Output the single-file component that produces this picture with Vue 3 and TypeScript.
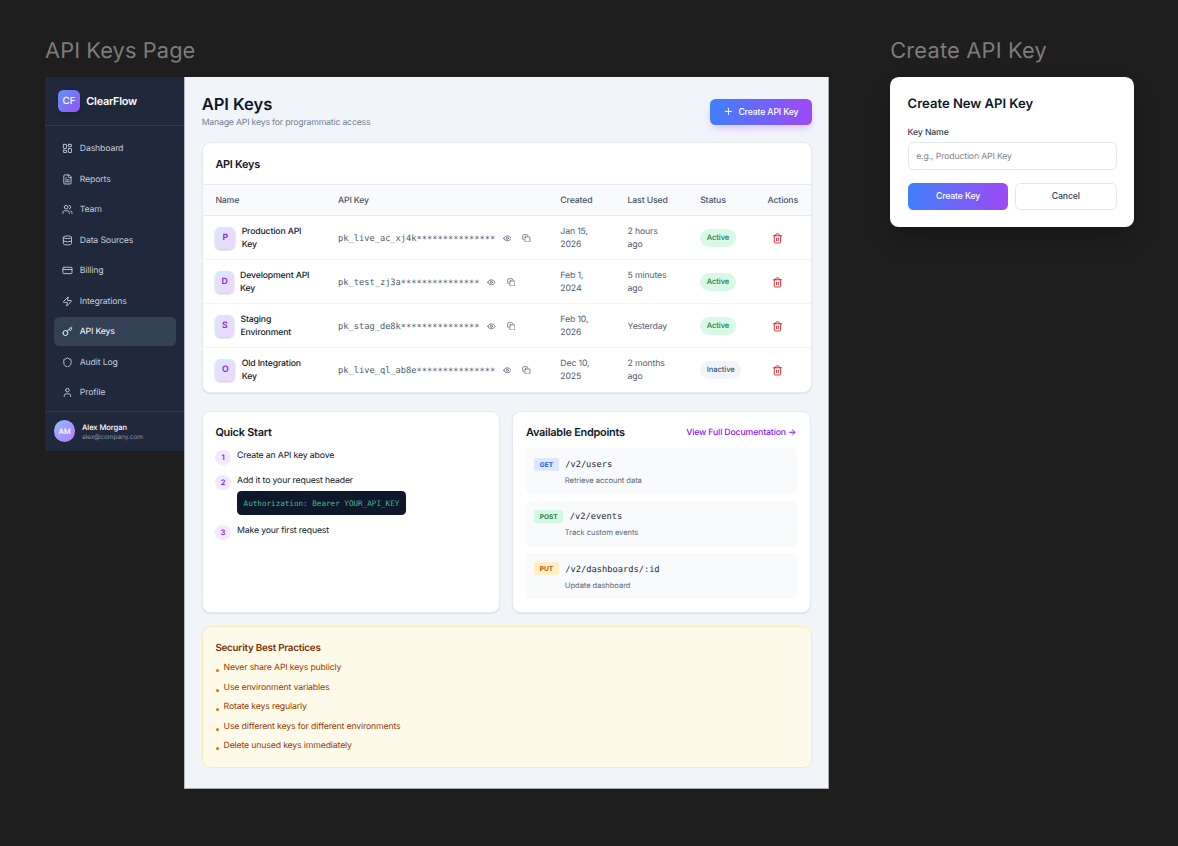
<script setup lang="ts">
interface NavItem {
  label: string
  icon: string[]
  active?: boolean
}

interface ApiKey {
  initial: string
  tileWidth: number
  name: [string, string]
  value: string
  created: [string, string]
  used: string[]
  active: boolean
}

interface Endpoint {
  method: string
  path: string
  text: string
}

const nav: NavItem[] = [
  { label: 'Dashboard', icon: ['M4 3h5a1 1 0 0 1 1 1v7a1 1 0 0 1-1 1H4a1 1 0 0 1-1-1V4a1 1 0 0 1 1-1z', 'M15 3h5a1 1 0 0 1 1 1v3a1 1 0 0 1-1 1h-5a1 1 0 0 1-1-1V4a1 1 0 0 1 1-1z', 'M15 12h5a1 1 0 0 1 1 1v7a1 1 0 0 1-1 1h-5a1 1 0 0 1-1-1v-7a1 1 0 0 1 1-1z', 'M4 16h5a1 1 0 0 1 1 1v3a1 1 0 0 1-1 1H4a1 1 0 0 1-1-1v-3a1 1 0 0 1 1-1z'] },
  { label: 'Reports', icon: ['M15 2H6a2 2 0 0 0-2 2v16a2 2 0 0 0 2 2h12a2 2 0 0 0 2-2V7z', 'M14 2v4a2 2 0 0 0 2 2h4', 'M10 9H8', 'M16 13H8', 'M16 17H8'] },
  { label: 'Team', icon: ['M16 21v-2a4 4 0 0 0-4-4H6a4 4 0 0 0-4 4v2', 'M5 7a4 4 0 1 0 8 0a4 4 0 1 0-8 0', 'M22 21v-2a4 4 0 0 0-3-3.87', 'M16 3.13a4 4 0 0 1 0 7.75'] },
  { label: 'Data Sources', icon: ['M3 5a9 3 0 1 0 18 0a9 3 0 1 0-18 0', 'M3 5v14a9 3 0 0 0 18 0V5', 'M3 12a9 3 0 0 0 18 0'] },
  { label: 'Billing', icon: ['M4 5h16a2 2 0 0 1 2 2v10a2 2 0 0 1-2 2H4a2 2 0 0 1-2-2V7a2 2 0 0 1 2-2z', 'M2 10h20'] },
  { label: 'Integrations', icon: ['M4 14a1 1 0 0 1-.78-1.63l9.9-10.2a.5.5 0 0 1 .86.46l-1.92 6.02A1 1 0 0 0 13 10h7a1 1 0 0 1 .78 1.63l-9.9 10.2a.5.5 0 0 1-.86-.46l1.92-6.02A1 1 0 0 0 11 14z'] },
  { label: 'API Keys', icon: ['m15.5 7.5 2.3 2.3a1 1 0 0 0 1.4 0l2.1-2.1a1 1 0 0 0 0-1.4L19 4', 'm21 2-9.6 9.6', 'M2 15.5a5.5 5.5 0 1 0 11 0a5.5 5.5 0 1 0-11 0'], active: true },
  { label: 'Audit Log', icon: ['M20 13c0 5-3.5 7.5-7.66 8.95a1 1 0 0 1-.67-.01C7.5 20.5 4 18 4 13V6a1 1 0 0 1 1-1c2 0 4.5-1.2 6.24-2.72a1.17 1.17 0 0 1 1.52 0C14.51 3.81 17 5 19 5a1 1 0 0 1 1 1z'] },
  { label: 'Profile', icon: ['M19 21v-2a4 4 0 0 0-4-4H9a4 4 0 0 0-4 4v2', 'M8 7a4 4 0 1 0 8 0a4 4 0 1 0-8 0'] },
]

const stars = '*'.repeat(15)

const keys: ApiKey[] = [
  { initial: 'P', tileWidth: 19.8, name: ['Production API', 'Key'], value: 'pk_live_ac_xj4k', created: ['Jan 15,', '2026'], used: ['2 hours', 'ago'], active: true },
  { initial: 'D', tileWidth: 18.2, name: ['Development API', 'Key'], value: 'pk_test_zj3a', created: ['Feb 1,', '2024'], used: ['5 minutes', 'ago'], active: true },
  { initial: 'S', tileWidth: 18.6, name: ['Staging', 'Environment'], value: 'pk_stag_de8k', created: ['Feb 10,', '2026'], used: ['Yesterday'], active: true },
  { initial: 'O', tileWidth: 19.8, name: ['Old Integration', 'Key'], value: 'pk_live_ql_ab8e', created: ['Dec 10,', '2025'], used: ['2 months', 'ago'], active: false },
]

const endpoints: Endpoint[] = [
  { method: 'GET', path: '/v2/users', text: 'Retrieve account data' },
  { method: 'POST', path: '/v2/events', text: 'Track custom events' },
  { method: 'PUT', path: '/v2/dashboards/:id', text: 'Update dashboard' },
]

const practices: string[] = [
  'Never share API keys publicly',
  'Use environment variables',
  'Rotate keys regularly',
  'Use different keys for different environments',
  'Delete unused keys immediately',
]
</script>

<template>
  <div class="canvas">
    <section class="board">
      <h2 class="board-label">API Keys Page</h2>
      <div class="frame">
        <aside class="sidebar">
          <div class="brand">
            <div class="logo">CF</div>
            <span class="brand-name">ClearFlow</span>
          </div>
          <nav class="nav">
            <a v-for="item in nav" :key="item.label" class="nav-item" :class="{ active: item.active }">
              <svg class="icon nav-icon" viewBox="0 0 24 24"><path v-for="d in item.icon" :key="d" :d="d" /></svg>
              <span>{{ item.label }}</span>
            </a>
          </nav>
          <div class="account">
            <div class="avatar">AM</div>
            <div class="account-text">
              <span class="account-name">Alex Morgan</span>
              <span class="account-mail">alex@company.com</span>
            </div>
          </div>
        </aside>

        <main class="main">
          <header class="page-head">
            <div>
              <h1>API Keys</h1>
              <p class="subtitle">Manage API keys for programmatic access</p>
            </div>
            <button class="btn primary create">
              <svg class="icon plus" viewBox="0 0 24 24"><path d="M5 12h14M12 5v14" /></svg>
              <span>Create API Key</span>
            </button>
          </header>

          <section class="card keys">
            <h3 class="keys-title">API Keys</h3>
            <div class="row head">
              <span>Name</span><span>API Key</span><span>Created</span><span>Last Used</span><span>Status</span><span>Actions</span>
            </div>
            <div v-for="k in keys" :key="k.value" class="row">
              <div class="name-cell">
                <div class="tile" :style="{ width: k.tileWidth + 'px' }">{{ k.initial }}</div>
                <div class="key-name"><div v-for="line in k.name" :key="line">{{ line }}</div></div>
              </div>
              <div class="value-cell">
                <code>{{ k.value }}<span class="stars">{{ stars }}</span></code>
                <svg class="icon small" viewBox="0 0 24 24"><path d="M2.06 12.35a1 1 0 0 1 0-.7 10.75 10.75 0 0 1 19.88 0 1 1 0 0 1 0 .7 10.75 10.75 0 0 1-19.88 0z" /><circle cx="12" cy="12" r="3" /></svg>
                <svg class="icon small copy" viewBox="0 0 24 24"><rect x="8" y="8" width="14" height="14" rx="2" /><path d="M4 16c-1.1 0-2-.9-2-2V4c0-1.1.9-2 2-2h10c1.1 0 2 .9 2 2" /></svg>
              </div>
              <div class="muted"><div v-for="line in k.created" :key="line">{{ line }}</div></div>
              <div class="muted" :class="{ single: k.used.length === 1 }"><div v-for="line in k.used" :key="line">{{ line }}</div></div>
              <div><span class="status" :class="{ off: !k.active }">{{ k.active ? 'Active' : 'Inactive' }}</span></div>
              <div class="action">
                <svg class="icon trash" viewBox="0 0 24 24"><path d="M3 6h18M19 6v14c0 1-1 2-2 2H7c-1 0-2-1-2-2V6M8 6V4c0-1 1-2 2-2h4c1 0 2 1 2 2v2M10 11v6M14 11v6" /></svg>
              </div>
            </div>
          </section>

          <div class="columns">
            <section class="card panel">
              <h3>Quick Start</h3>
              <ol class="steps">
                <li><span class="num">1</span><div class="step-text">Create an API key above</div></li>
                <li>
                  <span class="num">2</span>
                  <div class="step-text">Add it to your request header
                    <code class="snippet">Authorization: Bearer YOUR_API_KEY</code>
                  </div>
                </li>
                <li><span class="num">3</span><div class="step-text">Make your first request</div></li>
              </ol>
            </section>
            <section class="card panel">
              <div class="panel-head">
                <h3>Available Endpoints</h3>
                <a class="docs">View Full Documentation →</a>
              </div>
              <div class="endpoints">
                <div v-for="e in endpoints" :key="e.path" class="endpoint">
                  <div class="endpoint-top">
                    <span class="method" :class="e.method.toLowerCase()">{{ e.method }}</span>
                    <code>{{ e.path }}</code>
                  </div>
                  <p>{{ e.text }}</p>
                </div>
              </div>
            </section>
          </div>

          <section class="security">
            <h4>Security Best Practices</h4>
            <ul>
              <li v-for="p in practices" :key="p"><i class="dot"></i><span>{{ p }}</span></li>
            </ul>
          </section>
        </main>
      </div>
    </section>

    <section class="board">
      <h2 class="board-label wide">Create API Key</h2>
      <div class="modal">
        <h3>Create New API Key</h3>
        <label>Key Name</label>
        <div class="field">e.g., Production API Key</div>
        <div class="buttons">
          <button class="btn primary">Create Key</button>
          <button class="btn outline">Cancel</button>
        </div>
      </div>
    </section>
  </div>
</template>

<style>
html,
body {
  margin: 0;
  background: #1e1e1e;
}
</style>

<style scoped>
.canvas,
.canvas * {
  box-sizing: border-box;
}
.canvas {
  display: flex;
  gap: 61.3px;
  width: 1178px;
  height: 846px;
  padding: 36px 0 0 45px;
  overflow: hidden;
  background: #1e1e1e;
  font-family: Inter, 'Liberation Sans', sans-serif;
  font-size: 8.71px;
  line-height: 13.06px;
  letter-spacing: -0.15px;
  color: #0f172a;
  text-rendering: geometricPrecision;
  -webkit-font-smoothing: antialiased;
}
h1, h2, h3, h4, p, ol, ul {
  margin: 0;
  padding: 0;
  list-style: none;
}
code {
  font-family: 'DejaVu Sans Mono', monospace;
  letter-spacing: 0;
}
.icon {
  display: block;
  flex: none;
  fill: none;
  stroke: currentColor;
  stroke-width: 2;
  stroke-linecap: round;
  stroke-linejoin: round;
}
.board-label {
  height: 41.3px;
  padding-top: 1px;
  font-size: 21.8px;
  line-height: 28px;
  font-weight: 400;
  letter-spacing: 0.1px;
  color: #7c7c7c;
  white-space: nowrap;
}
.board-label.wide {
  letter-spacing: 0.2px;
}
.frame {
  display: flex;
  align-items: flex-start;
}

/* Sidebar */
.sidebar {
  width: 139.3px;
  height: 373.4px;
  display: flex;
  flex-direction: column;
  background: #20293b;
}
.brand {
  display: flex;
  align-items: center;
  gap: 6.5px;
  height: 48.4px;
  padding: 0 13.06px;
  border-bottom: 1px solid #2e3a4e;
}
.logo {
  width: 21.8px;
  height: 21.8px;
  border-radius: 5.4px;
  background: linear-gradient(135deg, #5b95f8, #9a50f6);
  color: #fff;
  font-size: 9.8px;
  font-weight: 500;
  line-height: 24px;
  text-align: center;
  box-shadow: 0 3px 5px rgba(0, 0, 0, 0.15);
}
.brand-name {
  padding-top: 1px;
  color: #fff;
  font-size: 10.9px;
  font-weight: 600;
  letter-spacing: -0.28px;
}
.nav {
  display: flex;
  flex-direction: column;
  gap: 2.18px;
  padding: 8.9px 8.7px;
  height: 285.2px;
}
.nav-item {
  display: flex;
  align-items: center;
  gap: 6.5px;
  height: 28.3px;
  flex: none;
  padding: 0 8.7px;
  border-radius: 5.4px;
  color: #c3ccd8;
}
.nav-item span {
  padding-top: 2.4px;
}
.nav-item.active {
  background: #334156;
  color: #fff;
}
.nav-icon {
  width: 10.9px;
  height: 10.9px;
}
.account {
  flex: 1;
  display: flex;
  align-items: center;
  gap: 6.5px;
  padding: 0 8.7px;
  border-top: 1px solid #2b3a4c;
}
.avatar {
  width: 21.8px;
  height: 21.8px;
  border-radius: 50%;
  background: linear-gradient(135deg, #8ebaff, #b67cfa);
  color: #fff;
  font-size: 7.6px;
  font-weight: 500;
  line-height: 23.2px;
  text-align: center;
}
.account-text {
  display: flex;
  flex-direction: column;
  padding-top: 2.4px;
  letter-spacing: -0.08px;
}
.account-name {
  color: #fff;
  font-size: 7.62px;
  font-weight: 500;
  line-height: 10.5px;
}
.account-mail {
  color: #8592a6;
  font-size: 6.53px;
  line-height: 8.7px;
}

/* Main */
.main {
  width: 644.6px;
  height: 711.3px;
  padding: 17.2px 16.4px 16.4px 16.4px;
  border: 0 solid #a6abae;
  border-width: 0 1px 1px;
  border-left-color: #b4b9c0;
  background: #f1f5fa;
}
.page-head {
  display: flex;
  justify-content: space-between;
  align-items: center;
  height: 34.8px;
  margin-bottom: 12.9px;
}
h1 {
  padding-top: 3px;
  font-size: 16.6px;
  font-weight: 600;
  line-height: 20px;
  letter-spacing: -0.05px;
}
.subtitle {
  padding-top: 2px;
  color: #718096;
  line-height: 13.8px;
  letter-spacing: -0.19px;
}
.btn {
  display: flex;
  align-items: center;
  justify-content: center;
  border: 0;
  border-radius: 5.4px;
  font: 500 8.71px/13px Inter, sans-serif;
  letter-spacing: -0.15px;
}
.primary {
  color: #fff;
  background: linear-gradient(90deg, #3f80fb, #9e49f6);
}
.create {
  width: 101.5px;
  height: 26.2px;
  gap: 4.4px;
  box-shadow: 0 5px 8px -2px rgba(173, 70, 255, 0.3);
}
.create span {
  padding-top: 1.4px;
}
.plus {
  width: 10.9px;
  height: 10.9px;
}
.card {
  background: #fff;
  border: 1px solid #e5eaf1;
  border-radius: 8.7px;
  box-shadow: 0 1px 1.5px rgba(15, 23, 42, 0.09);
}
.keys {
  height: 250.6px;
  overflow: hidden;
}
.keys-title {
  height: 41.2px;
  padding-left: 12.7px;
  font-size: 10.9px;
  font-weight: 600;
  line-height: 42px;
  letter-spacing: -0.26px;
}
.row {
  display: grid;
  grid-template-columns: 122.6px 222.4px 67.2px 72.6px 67.4px 1fr;
  align-items: center;
  height: 44px;
  padding-left: 12.7px;
  border-top: 1px solid #f1f5f9;
}
.row.head {
  height: 31px;
  background: #f8fafc;
  border-top-color: #e7ecf2;
  color: #45556c;
  font-weight: 500;
}
.row.head span {
  padding-top: 1.6px;
}
.row.head + .row {
  border-top-color: #e7ecf2;
}
.name-cell,
.value-cell {
  display: flex;
  align-items: center;
}
.name-cell {
  gap: 6.5px;
}
.tile {
  flex: none;
  height: 21.8px;
  border-radius: 5.4px;
  background: linear-gradient(135deg, #dbe8fe, #ecd6fd);
  box-shadow: 0 1px 2px rgba(15, 23, 42, 0.25);
  color: #9013f5;
  font-weight: 600;
  line-height: 23.8px;
  text-align: center;
}
.key-name {
  padding-top: 1.6px;
  font-weight: 500;
}
.value-cell {
  color: #4a5a70;
}
.value-cell code {
  padding-top: 3px;
}
.stars {
  line-height: 1px;
  vertical-align: -1px;
}
.small {
  width: 8.7px;
  height: 8.7px;
  margin-left: 7.6px;
}
.copy {
  margin-left: 11px;
}
.muted {
  padding-top: 1.6px;
  color: #526177;
}
.muted.single {
  padding-top: 2.8px;
}
.status {
  display: inline-block;
  height: 17.4px;
  padding: 0 6.53px;
  border-radius: 9px;
  background: #d7f9e6;
  color: #1d7a54;
  font-size: 7.62px;
  font-weight: 500;
  line-height: 18.6px;
  letter-spacing: -0.06px;
  vertical-align: middle;
}
.status.off {
  background: #f1f5f9;
  color: #45556c;
}
.action {
  padding: 0.6px 0 0 4.3px;
  color: #e0202a;
}
.trash {
  width: 10.9px;
  height: 10.9px;
}

/* Panels */
.columns {
  display: grid;
  grid-template-columns: 1fr 1fr;
  gap: 12.2px;
  height: 201.5px;
  margin: 18px 0.6px 13.3px 0;
}
.panel {
  padding: 12.9px 12.7px;
}
.panel h3 {
  font-size: 10.9px;
  font-weight: 600;
  line-height: 15.2px;
  letter-spacing: -0.24px;
}
.panel-head {
  display: flex;
  align-items: center;
  justify-content: space-between;
  height: 15.2px;
  padding-right: 1px;
}
.docs {
  padding-top: 2.4px;
  color: #9013f5;
  font-weight: 500;
}
.steps {
  display: flex;
  flex-direction: column;
  gap: 9.8px;
  margin-top: 9px;
}
.steps li {
  display: flex;
  gap: 6.5px;
  min-height: 15.2px;
}
.step-text {
  padding-top: 1px;
}
.num {
  flex: none;
  width: 15.2px;
  height: 15.2px;
  margin: 1px 0 -1px;
  border-radius: 50%;
  background: #f3e8ff;
  color: #9013f5;
  font-size: 7.62px;
  font-weight: 600;
  line-height: 15.8px;
  text-align: center;
}
.snippet {
  display: block;
  width: 169.2px;
  height: 24px;
  margin: 3px 0 -1px;
  padding-left: 6.5px;
  border-radius: 4.4px;
  background: #0f172a;
  color: #3dbd88;
  font-size: 7.62px;
  line-height: 25.4px;
  white-space: nowrap;
}
.endpoints {
  display: flex;
  flex-direction: column;
  gap: 6.53px;
  margin-top: 8.6px;
}
.endpoint {
  height: 45.8px;
  padding: 8.9px 8.2px;
  border-radius: 5.4px;
  background: #f8fafc;
}
.endpoint-top {
  display: flex;
  align-items: center;
  gap: 6.5px;
  height: 13.5px;
}
.endpoint code {
  padding-top: 3px;
  color: #1e293b;
}
.endpoint p {
  margin: 4.2px 0 0 30.6px;
  color: #5a6a80;
  font-size: 7.62px;
  line-height: 11px;
  letter-spacing: -0.07px;
}
.method {
  height: 13.1px;
  padding: 0 5.6px;
  border-radius: 2.6px;
  font-size: 6.53px;
  font-weight: 700;
  line-height: 14.4px;
  letter-spacing: 0;
}
.get { background: #dbe8fe; color: #2450e6; }
.post { background: #d3f9e2; color: #1d7a54; }
.put { background: #fef0c0; color: #bb4d00; }

.security {
  height: 142.4px;
  padding: 12.7px;
  border: 1px solid #faebb4;
  border-radius: 8.7px;
  background: #fefaea;
}
.security h4 {
  padding-top: 1.4px;
  color: #7b3306;
  font-size: 9.8px;
  font-weight: 600;
  line-height: 15.2px;
  letter-spacing: -0.22px;
}
.security ul {
  margin-top: 5.4px;
}
.security li {
  display: flex;
  align-items: center;
  height: 19.6px;
  padding-bottom: 4.8px;
  color: #973c00;
}
.dot {
  width: 3px;
  height: 3px;
  margin: 3.6px 4.4px 0 0.8px;
  border-radius: 50%;
  background: #e17100;
}

/* Modal */
.modal {
  width: 243.9px;
  height: 150px;
  padding: 17.4px;
  border-radius: 8.7px;
  background: #fff;
  box-shadow: 0 13px 27px -6px rgba(0, 0, 0, 0.35);
}
.modal h3 {
  padding-top: 1px;
  font-size: 13.06px;
  font-weight: 600;
  line-height: 17.4px;
  letter-spacing: 0;
}
.modal label {
  display: block;
  margin-top: 13.7px;
  color: #314158;
  font-weight: 500;
}
.field {
  height: 28.3px;
  margin-top: 2.3px;
  padding-left: 7.7px;
  border: 1px solid #e2e8f0;
  border-radius: 5.4px;
  color: #858585;
  line-height: 28.4px;
}
.buttons {
  display: grid;
  grid-template-columns: 100.8px 1fr;
  gap: 6.5px;
  height: 27.4px;
  margin-top: 12.6px;
}
.outline {
  border: 1px solid #e2e8f0;
  background: #fff;
  color: #314158;
}
</style>
